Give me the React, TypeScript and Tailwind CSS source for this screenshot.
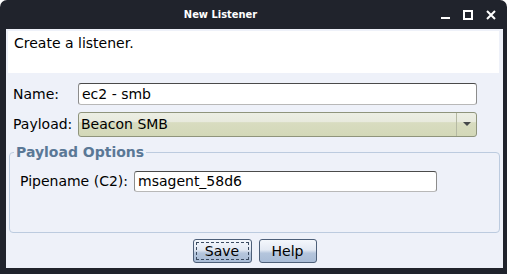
import type { ReactNode } from "react";

const ui = "font-['DejaVu_Sans','Liberation_Sans',sans-serif]";

function TextField({ value, className }: { value: string; className: string }) {
  return (
    <div
      className={`flex items-center rounded-[3px] border border-[#8c8c8c] border-t-[#4a4a4a] border-b-[#b8b8b8] bg-white pl-[3px] text-[14px] leading-[17px] text-black ${className}`}
    >
      {value}
    </div>
  );
}

function Button({ label, focused, className }: { label: string; focused?: boolean; className: string }) {
  return (
    <button
      type="button"
      className={`flex h-[24px] items-center justify-center rounded-[3px] border border-[#4d5f78] bg-[linear-gradient(to_bottom,#f4f7fc_0%,#e3e9f3_45%,#b4c5dc_60%,#a9bcd6_100%)] p-[2px] text-[14px] leading-[17px] text-black ${className}`}
    >
      <span
        className={`flex h-full w-full items-center justify-center pt-[1px] ${
          focused ? "border border-dashed border-[#3a4a60]" : "border border-transparent"
        }`}
      >
        {label}
      </span>
    </button>
  );
}

function Row({ label, labelWidth, children }: { label: string; labelWidth: string; children: ReactNode }) {
  return (
    <div className="flex items-center">
      <span className={`${labelWidth} shrink-0 text-[14px] leading-[17px] text-black`}>{label}</span>
      {children}
    </div>
  );
}

export default function App() {
  return (
    <div className={`h-[275px] w-[508px] bg-white ${ui}`}>
      <div className="flex h-[274px] w-[507px] flex-col rounded-t-[7px] bg-[#20232c]">
        <div className="flex h-[29px] shrink-0 items-center">
          <div className="flex-1 text-center font-['DejaVu_Sans_Condensed','DejaVu_Sans',sans-serif] text-[11px] font-bold leading-[15px] text-white">
            New Listener
          </div>
          <div className="flex items-center gap-[13px] pr-[11px]">
            <svg width="9" height="10" viewBox="0 0 9 10" aria-hidden="true">
              <rect x="0" y="7" width="9" height="2" fill="#ffffff" />
            </svg>
            <svg width="10" height="10" viewBox="0 0 10 10" aria-hidden="true">
              <rect x="1" y="1" width="8" height="8" fill="none" stroke="#ffffff" strokeWidth="2" />
            </svg>
            <svg width="10" height="10" viewBox="0 0 10 10" aria-hidden="true">
              <path d="M1 1 L9 9 M9 1 L1 9" stroke="#ffffff" strokeWidth="2" />
            </svg>
          </div>
        </div>

        <div className="mb-[6px] ml-[6px] mr-[4px] flex flex-1 flex-col bg-[#eef1f9]">
          <div className="ml-[2px] mr-[4px] mt-[2px] h-[42px] bg-white pl-[6px] pt-[4px] text-[14px] leading-[17px] text-black">
            Create a listener.
          </div>

          <div className="mt-[10px] flex flex-col gap-[7px] pl-[7px] pr-[26px]">
            <Row label="Name:" labelWidth="w-[65px]">
              <TextField value="ec2 - smb" className="h-[22px] flex-1" />
            </Row>
            <Row label="Payload:" labelWidth="w-[65px]">
              <div className="flex h-[25px] flex-1 overflow-hidden rounded-[3px] border border-[#8f947c] bg-[linear-gradient(to_bottom,#eceee4_0%,#e8eadd_38%,#d8dcc0_42%,#d3d8b8_100%)]">
                <span className="flex flex-1 items-center pl-[2px] text-[14px] leading-[17px] text-black">
                  Beacon SMB
                </span>
                <span className="flex w-[20px] items-center justify-center border-l border-[#b5b9a3]">
                  <svg width="8" height="5" viewBox="0 0 8 5" aria-hidden="true">
                    <path d="M0 0 H8 L4 4 Z" fill="#45484a" />
                  </svg>
                </span>
              </div>
            </Row>
          </div>

          <fieldset className="mx-[3px] mt-[7px] h-[89px] rounded-[4px] border border-[#bccbdf]">
            <legend className="ml-[4px] px-[2px] text-[14px] font-bold leading-[17px] text-[#5a7896]">
              Payload Options
            </legend>
            <div className="mt-[10px] pl-[10px]">
              <Row label="Pipename (C2):" labelWidth="w-[114px]">
                <TextField value="msagent_58d6" className="h-[21px] w-[303px]" />
              </Row>
            </div>
          </fieldset>

          <div className="mt-[6px] flex justify-center gap-[7px]">
            <Button label="Save" focused className="w-[59px]" />
            <Button label="Help" className="w-[58px]" />
          </div>
        </div>
      </div>
    </div>
  );
}
